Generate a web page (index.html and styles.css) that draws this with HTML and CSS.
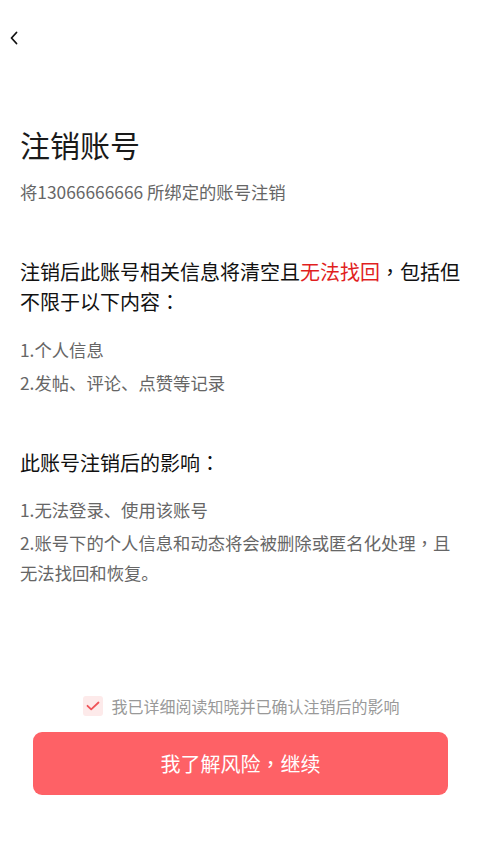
FILE: index.html
```html
<!DOCTYPE html>
<html lang="zh-CN">
<head>
<meta charset="utf-8">
<meta name="viewport" content="width=device-width, initial-scale=1">
<title>注销账号</title>
<link rel="stylesheet" href="styles.css">
</head>
<body>
<div class="page">
  <header class="topbar">
    <svg class="back" width="10" height="14" viewBox="0 0 10 14" aria-hidden="true">
      <path d="M7.5 1.5 L2.5 7 L7.5 12.5" fill="none" stroke="#111" stroke-width="1.8" stroke-linecap="round" stroke-linejoin="round"/>
    </svg>
  </header>
  <main class="content">
    <h1 class="title">注销账号</h1>
    <p class="subtitle">将13066666666 所绑定的账号注销</p>
    <p class="lead">注销后此账号相关信息将清空且<span class="danger">无法找回</span><span class="pc" lang="zh-TW">，</span>包括但不限于以下内容<span class="pc" lang="zh-TW">：</span></p>
    <ol class="list">
      <li>1.个人信息</li>
      <li>2.发帖、评论、点赞等记录</li>
    </ol>
    <h2 class="section">此账号注销后的影响<span class="pc" lang="zh-TW">：</span></h2>
    <ol class="list">
      <li>1.无法登录、使用该账号</li>
      <li>2.账号下的个人信息和动态将会被删除或匿名化处理<span class="pc" lang="zh-TW">，</span>且无法找回和恢复。</li>
    </ol>
  </main>
  <footer class="footer">
    <label class="agree">
      <span class="check">
        <svg width="14" height="10" viewBox="0 0 14 10" aria-hidden="true">
          <path d="M1.5 4.8 L5.2 8.3 L12.5 1.5" fill="none" stroke="#ef5358" stroke-width="1.8" stroke-linecap="round" stroke-linejoin="round"/>
        </svg>
      </span>
      <span class="agree-text">我已详细阅读知晓并已确认注销后的影响</span>
    </label>
    <button class="btn" type="button">我了解风险<span class="pc" lang="zh-TW">，</span>继续</button>
  </footer>
</div>
</body>
</html>
```

FILE: styles.css
```css
* { box-sizing: border-box; }
html, body { margin: 0; padding: 0; background: #fff; }
body {
  font-family: "Noto Sans CJK SC", "Noto Sans", sans-serif;
  color: #111;
}
.pc {
  font-family: "Noto Sans CJK TC", "Noto Sans CJK SC", sans-serif;
}
.page {
  min-height: 100vh;
  display: flex;
  flex-direction: column;
}
.topbar {
  height: 125px;
  padding: 31px 0 0 9px;
}
.back { display: block; }
.content {
  padding: 0 20px;
}
.title {
  margin: 0;
  font-size: 30px;
  line-height: 38px;
  font-weight: 400;
  color: #1a1a1a;
}
.subtitle {
  margin: 17px 0 0;
  font-size: 17.33px;
  line-height: 24px;
  color: #666;
}
.lead {
  margin: 53px 0 0;
  font-size: 20px;
  line-height: 30px;
  color: #111;
}
.danger { color: #e11f1f; }
.list {
  list-style: none;
  margin: 18px 0 0;
  padding: 0;
  font-size: 17.33px;
  line-height: 30px;
  color: #666;
}
.list li + li { margin-top: 3px; }
.section {
  margin: 50px 0 0;
  font-size: 20px;
  line-height: 30px;
  font-weight: 400;
  color: #111;
}
.section + .list { margin-top: 17px; }
.footer {
  margin-top: auto;
  padding: 0 32px 58px 33px;
  display: flex;
  flex-direction: column;
  align-items: stretch;
}
.agree {
  display: flex;
  align-items: center;
  justify-content: center;
  gap: 8px;
  height: 20px;
  padding-left: 2px;
}
.check {
  width: 20px;
  height: 20px;
  border-radius: 3px;
  background: #fdeaea;
  display: flex;
  align-items: center;
  justify-content: center;
}
.check svg { display: block; }
.agree-text {
  font-size: 16px;
  line-height: 20px;
  color: #999;
}
.btn {
  margin-top: 16px;
  height: 63px;
  border: 0;
  border-radius: 9px;
  background: #fe6166;
  color: #fff;
  font-family: inherit;
  font-size: 20px;
  line-height: 30px;
  padding: 0;
}
```
